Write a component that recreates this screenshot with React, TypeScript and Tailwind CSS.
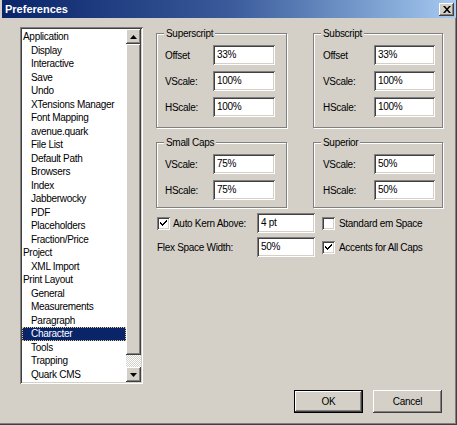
import React from "react";

const raised =
  "shadow-[inset_-1px_-1px_0_#404040,inset_1px_1px_0_#ffffff,inset_-2px_-2px_0_#808080,inset_2px_2px_0_#d4d0c8]";
const sunken =
  "shadow-[inset_1px_1px_0_#808080,inset_-1px_-1px_0_#ffffff,inset_2px_2px_0_#404040,inset_-2px_-2px_0_#d4d0c8]";

const items: { label: string; sub?: boolean; selected?: boolean }[] = [
  { label: "Application" },
  { label: "Display", sub: true },
  { label: "Interactive", sub: true },
  { label: "Save", sub: true },
  { label: "Undo", sub: true },
  { label: "XTensions Manager", sub: true },
  { label: "Font Mapping", sub: true },
  { label: "avenue.quark", sub: true },
  { label: "File List", sub: true },
  { label: "Default Path", sub: true },
  { label: "Browsers", sub: true },
  { label: "Index", sub: true },
  { label: "Jabberwocky", sub: true },
  { label: "PDF", sub: true },
  { label: "Placeholders", sub: true },
  { label: "Fraction/Price", sub: true },
  { label: "Project" },
  { label: "XML Import", sub: true },
  { label: "Print Layout" },
  { label: "General", sub: true },
  { label: "Measurements", sub: true },
  { label: "Paragraph", sub: true },
  { label: "Character", sub: true, selected: true },
  { label: "Tools", sub: true },
  { label: "Trapping", sub: true },
  { label: "Quark CMS", sub: true },
];

function Field({ value, w }: { value: string; w: string }) {
  return (
    <div className={`${w} h-[20px] bg-white ${sunken} pl-[4px] pt-[3px] leading-[13px]`}>
      {value}
    </div>
  );
}

function Check({ checked }: { checked: boolean }) {
  return (
    <div className={`w-[13px] h-[13px] bg-white ${sunken} flex items-center justify-center shrink-0`}>
      {checked && (
        <svg width="7" height="7" viewBox="0 0 7 7">
          <path d="M0 2h1v1h1v1h1V3h1V2h1V1h1V0h1v2H6v1H5v1H4v1H3v1H2V5H1V4H0z" fill="#000" />
        </svg>
      )}
    </div>
  );
}

function Group({
  title,
  rows,
  w,
  h,
  labelW,
  fieldW,
  pl,
  pt,
}: {
  title: string;
  rows: [string, string][];
  w: string;
  h: string;
  labelW: string;
  fieldW: string;
  pl: string;
  pt: string;
}) {
  return (
    <div className={`relative ${w} ${h} border border-[#808080] shadow-[1px_1px_0_#ffffff,inset_1px_1px_0_#ffffff]`}>
      <span className="absolute left-[7px] -top-[7px] px-[2px] bg-[#d4d0c8] leading-[13px]">{title}</span>
      <div className={`flex flex-col gap-[6px] ${pl} ${pt}`}>
        {rows.map(([label, value]) => (
          <div key={label} className="flex items-center">
            <span className={`${labelW}`}>{label}</span>
            <Field value={value} w={fieldW} />
          </div>
        ))}
      </div>
    </div>
  );
}

function Arrow({ up }: { up?: boolean }) {
  return (
    <svg width="7" height="4" viewBox="0 0 7 4">
      <path d={up ? "M3.5 0L7 4H0z" : "M0 0h7L3.5 4z"} fill="#000" />
    </svg>
  );
}

export default function App() {
  return (
    <div
      className="w-[457px] h-[425px] bg-[#d4d0c8] text-black text-[10px] tracking-[-0.3px] flex flex-col pl-[2px] pr-[1px] shadow-[inset_-1px_-1px_0_#404040,inset_-2px_-2px_0_#808080]"
      style={{ fontFamily: '"Liberation Sans", Arial, sans-serif' }}
    >
      {/* 标题栏 */}
      <div className="h-[18px] flex items-center justify-between bg-gradient-to-r from-[#0a246a] via-[#3a5a9a] to-[#a6caf0] pl-[3px] pr-[2px]">
        <span className="text-white font-bold text-[11px] tracking-normal">Preferences</span>
        <div className={`w-[15px] h-[13px] bg-[#d4d0c8] ${raised} flex items-center justify-center`}>
          <svg width="8" height="7" viewBox="0 0 8 7">
            <path d="M0 0h2l2 2.2L6 0h2L5 3.5 8 7H6L4 4.8 2 7H0l3-3.5z" fill="#000" />
          </svg>
        </div>
      </div>

      <div className="flex items-start pl-[18px] mt-[9px]">
        {/* 列表 */}
        <div className={`w-[123px] h-[357px] bg-white ${sunken} p-[2px] flex`}>
          <div className="flex-1 overflow-hidden pt-[1px]">
            {items.map((it) => (
              <div
                key={it.label}
                className={`h-[13.5px] leading-[13.5px] whitespace-nowrap ${it.sub ? "pl-[9px]" : "pl-[1px]"} ${
                  it.selected
                    ? "bg-[#0a246a] text-white outline outline-1 outline-dotted outline-[#e0d080] -outline-offset-1"
                    : ""
                }`}
              >
                {it.label}
              </div>
            ))}
          </div>
          <div className="w-[15px] flex flex-col">
            <div className={`h-[15px] bg-[#d4d0c8] ${raised} flex items-center justify-center`}>
              <Arrow up />
            </div>
            <div className={`h-[311px] bg-[#d4d0c8] ${raised}`} />
            <div className="flex-1 bg-[repeating-conic-gradient(#ffffff_0_25%,#d4d0c8_0_50%)] bg-[length:2px_2px]" />
            <div className={`h-[15px] bg-[#d4d0c8] ${raised} flex items-center justify-center`}>
              <Arrow />
            </div>
          </div>
        </div>

        {/* 右侧设置 */}
        <div className="ml-[13px] mt-[6px] h-[380px] w-[287px] flex flex-col">
          <div className="flex gap-[26px]">
            <Group
              title="Superscript"
              w="w-[131px]"
              h="h-[95px]"
              pl="pl-[8px]"
              pt="pt-[11px]"
              labelW="w-[48px]"
              fieldW="w-[62px]"
              rows={[
                ["Offset", "33%"],
                ["VScale:", "100%"],
                ["HScale:", "100%"],
              ]}
            />
            <Group
              title="Subscript"
              w="w-[130px]"
              h="h-[95px]"
              pl="pl-[9px]"
              pt="pt-[11px]"
              labelW="w-[51px]"
              fieldW="w-[61px]"
              rows={[
                ["Offset", "33%"],
                ["VScale:", "100%"],
                ["HScale:", "100%"],
              ]}
            />
          </div>
          <div className="flex gap-[26px] mt-[14px]">
            <Group
              title="Small Caps"
              w="w-[131px]"
              h="h-[66px]"
              pl="pl-[8px]"
              pt="pt-[11px]"
              labelW="w-[48px]"
              fieldW="w-[62px]"
              rows={[
                ["VScale:", "75%"],
                ["HScale:", "75%"],
              ]}
            />
            <Group
              title="Superior"
              w="w-[130px]"
              h="h-[66px]"
              pl="pl-[9px]"
              pt="pt-[11px]"
              labelW="w-[51px]"
              fieldW="w-[61px]"
              rows={[
                ["VScale:", "50%"],
                ["HScale:", "50%"],
              ]}
            />
          </div>

          <div className="mt-[5px] flex flex-col gap-[4px]">
            <div className="flex items-center">
              <div className="w-[101px] flex items-center gap-[3px] pl-[1px] whitespace-nowrap">
                <Check checked />
                <span>Auto Kern Above:</span>
              </div>
              <Field value="4 pt" w="w-[58px]" />
              <div className="ml-[7px] flex items-center gap-[4px] whitespace-nowrap">
                <Check checked={false} />
                <span>Standard em Space</span>
              </div>
            </div>
            <div className="flex items-center">
              <span className="w-[101px] pl-[1px] whitespace-nowrap">Flex Space Width:</span>
              <Field value="50%" w="w-[58px]" />
              <div className="ml-[7px] flex items-center gap-[4px] whitespace-nowrap">
                <Check checked />
                <span>Accents for All Caps</span>
              </div>
            </div>
          </div>

          <div className="mt-auto flex justify-end gap-[10px] pr-[1px]">
            <div className="w-[69px] h-[23px] border border-black">
              <div className={`w-full h-full bg-[#d4d0c8] ${raised} flex items-center justify-center`}>OK</div>
            </div>
            <div className={`w-[69px] h-[23px] bg-[#d4d0c8] ${raised} flex items-center justify-center`}>Cancel</div>
          </div>
        </div>
      </div>
    </div>
  );
}
